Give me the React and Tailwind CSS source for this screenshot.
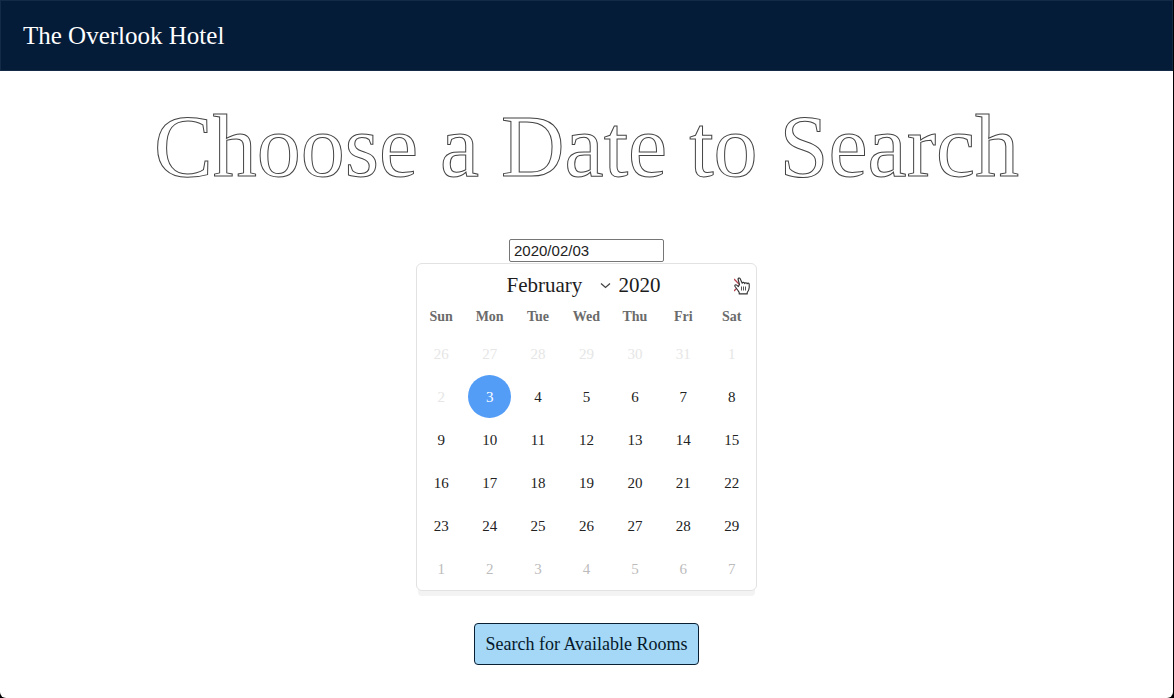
import { useState } from "react";

const MONTHS = [
  "January", "February", "March", "April", "May", "June",
  "July", "August", "September", "October", "November", "December",
];
const WEEKDAYS = ["Sun", "Mon", "Tue", "Wed", "Thu", "Fri", "Sat"];
const FIRST_OPEN_DAY = new Date(2020, 1, 3);

function buildWeeks(year, month) {
  const offset = new Date(year, month, 1).getDay();
  return Array.from({ length: 6 }, (_, week) =>
    Array.from({ length: 7 }, (_, day) => new Date(year, month, 1 - offset + week * 7 + day))
  );
}

function formatDate(date) {
  const month = String(date.getMonth() + 1).padStart(2, "0");
  const day = String(date.getDate()).padStart(2, "0");
  return `${date.getFullYear()}/${month}/${day}`;
}

function dayStyle(date, month, selected) {
  if (date.getTime() === selected.getTime()) return "bg-[#549df7] text-white";
  if (date < FIRST_OPEN_DAY) return "text-[#e6e6e6]";
  if (date.getMonth() !== month) return "text-[#bcbcbc]";
  return "text-[#222222] hover:bg-gray-100";
}

function HandPointer() {
  return (
    <svg
      className="pointer-events-none absolute top-1 left-2 h-[18px] w-4"
      viewBox="0 0 16 18"
      aria-hidden="true"
    >
      <path
        d="M4.4 9.600 2.700 8.100C1.700 7.300.500 8.100.900 9.200L3.800 13.300C4.400 14.200 4.900 14.800 5.200 15.600V16.900H13.200V15.600C14.400 14 15.200 12.600 15.200 10.600V7.200C15.200 5.800 13.300 5.800 13.100 7 13 5.400 11 5.400 10.700 6.600 10.400 5 8.500 5.100 8.200 6.300L6.200 1.800C5.600.500 3.800 1.100 4.100 2.500L5.500 7.500Z"
        fill="#fff"
        stroke="#333"
        strokeWidth="1.1"
        strokeLinejoin="round"
      />
      <path d="M7.500 9.500v4M9.500 9.500v4M11.500 9.500v4" stroke="#555" strokeWidth="1" />
    </svg>
  );
}

function Calendar({ selected, onSelect }) {
  const [year, setYear] = useState(2020);
  const [month, setMonth] = useState(1);

  function showNext() {
    setMonth((month + 1) % 12);
    if (month === 11) setYear(year + 1);
  }

  return (
    <div className="mt-px w-[341px] max-w-full rounded-md border border-[#e2e2e2] bg-white shadow-[0_7px_0_-2px_#f3f3f3]">
      <div className="grid h-[42px] grid-cols-[1fr_auto_1fr] items-center">
        <div className="col-start-2 flex items-center gap-2 pr-1.5">
          <div className="grid items-center">
            <select
              aria-label="Month"
              value={month}
              onChange={(e) => setMonth(Number(e.target.value))}
              className="col-start-1 row-start-1 w-[104px] appearance-none bg-transparent text-[21px] leading-6 text-[#1c1c1c]"
            >
              {MONTHS.map((name, i) => (
                <option key={name} value={i}>{name}</option>
              ))}
            </select>
            <svg
              className="pointer-events-none col-start-1 row-start-1 h-[7px] w-[11px] justify-self-end"
              viewBox="0 0 11 7"
              fill="none"
              stroke="#444"
              aria-hidden="true"
            >
              <path d="M1 1.500 5.500 5.500 10 1.500" strokeWidth="1.300" />
            </svg>
          </div>
          <input
            aria-label="Year"
            inputMode="numeric"
            value={year}
            onChange={(e) => setYear(Number(e.target.value) || 0)}
            className="w-[42px] bg-transparent text-[21px] leading-6 text-[#1c1c1c]"
          />
        </div>
        <button
          type="button"
          aria-label="Next month"
          onClick={showNext}
          className="relative flex h-6 w-[30px] items-center justify-self-end"
        >
          <svg className="ml-2 h-4 w-2" viewBox="0 0 8 16" fill="none" stroke="#b4434d" aria-hidden="true">
            <path d="M0 2 6 8 0 14" strokeWidth="1.300" />
          </svg>
          <HandPointer />
        </button>
      </div>
      <table className="w-full table-fixed border-collapse text-center">
        <thead>
          <tr>
            {WEEKDAYS.map((name) => (
              <th key={name} scope="col" className="h-[26px] p-0 pb-1 text-sm font-bold text-[#6b6b6b]">
                {name}
              </th>
            ))}
          </tr>
        </thead>
        <tbody>
          {buildWeeks(year, month).map((week) => (
            <tr key={week[0].getTime()}>
              {week.map((date) => (
                <td key={date.getTime()} className="p-0">
                  <button
                    type="button"
                    disabled={date < FIRST_OPEN_DAY}
                    onClick={() => onSelect(date)}
                    className={`mx-auto block size-[43px] rounded-full pt-0.5 text-[15px] ${dayStyle(date, month, selected)}`}
                  >
                    {date.getDate()}
                  </button>
                </td>
              ))}
            </tr>
          ))}
        </tbody>
      </table>
    </div>
  );
}

export default function App() {
  const [selected, setSelected] = useState(FIRST_OPEN_DAY);

  return (
    <div className="flex min-h-screen flex-col border-r border-black bg-black font-['Liberation_Serif',serif]">
      <div className="flex grow flex-col rounded-b-md bg-white">
        <header className="flex h-[71px] items-center border border-[#142b47] bg-[#051c39] px-[22px]">
          <a href="#" className="text-[25px] leading-8 text-white">The Overlook Hotel</a>
        </header>
        <main className="flex flex-col items-center px-4 pb-8">
          <h1 className="mt-6 text-center text-[88px] leading-[104px] text-white [-webkit-text-stroke:1px_#444]">
            Choose a Date to Search
          </h1>
          <form className="mt-10 flex max-w-full flex-col items-center" onSubmit={(e) => e.preventDefault()}>
            <input
              aria-label="Date"
              readOnly
              value={formatDate(selected)}
              className="h-[23px] w-[155px] rounded-xs border border-[#767676] bg-white px-1 font-['Liberation_Sans',sans-serif] text-[15px] leading-5 text-[#222222]"
            />
            <Calendar selected={selected} onSelect={setSelected} />
            <button
              type="submit"
              className="mt-8 h-[42px] rounded border border-[#0b1f33] bg-[#a5d8f6] px-2.5 text-lg text-[#06182b]"
            >
              Search for Available Rooms
            </button>
          </form>
        </main>
      </div>
    </div>
  );
}
